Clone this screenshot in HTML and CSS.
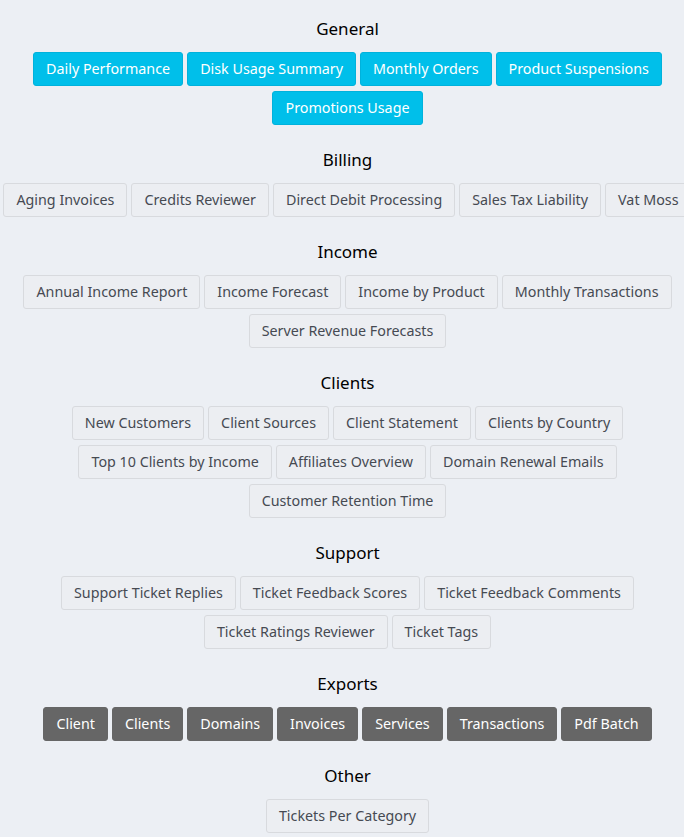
FILE: index.html
```html
<!DOCTYPE html>
<html>
<head>
<meta charset="utf-8">
<link rel="stylesheet" href="styles.css">
</head>
<body>
<div class="page">
  <section class="group">
    <h2 class="title">General</h2>
    <div class="btns">
      <a class="btn btn-info">Daily Performance</a>
      <a class="btn btn-info">Disk Usage Summary</a>
      <a class="btn btn-info">Monthly Orders</a>
      <a class="btn btn-info">Product Suspensions</a>
      <a class="btn btn-info">Promotions Usage</a>
    </div>
  </section>
  <section class="group">
    <h2 class="title">Billing</h2>
    <div class="btns nowrap">
      <a class="btn">Aging Invoices</a>
      <a class="btn">Credits Reviewer</a>
      <a class="btn">Direct Debit Processing</a>
      <a class="btn">Sales Tax Liability</a>
      <a class="btn">Vat Moss</a>
    </div>
  </section>
  <section class="group">
    <h2 class="title">Income</h2>
    <div class="btns">
      <a class="btn">Annual Income Report</a>
      <a class="btn">Income Forecast</a>
      <a class="btn">Income by Product</a>
      <a class="btn">Monthly Transactions</a>
      <a class="btn">Server Revenue Forecasts</a>
    </div>
  </section>
  <section class="group">
    <h2 class="title">Clients</h2>
    <div class="btns">
      <a class="btn">New Customers</a>
      <a class="btn">Client Sources</a>
      <a class="btn">Client Statement</a>
      <a class="btn">Clients by Country</a>
      <a class="btn">Top 10 Clients by Income</a>
      <a class="btn">Affiliates Overview</a>
      <a class="btn">Domain Renewal Emails</a>
      <a class="btn">Customer Retention Time</a>
    </div>
  </section>
  <section class="group">
    <h2 class="title">Support</h2>
    <div class="btns">
      <a class="btn">Support Ticket Replies</a>
      <a class="btn">Ticket Feedback Scores</a>
      <a class="btn">Ticket Feedback Comments</a>
      <a class="btn">Ticket Ratings Reviewer</a>
      <a class="btn">Ticket Tags</a>
    </div>
  </section>
  <section class="group">
    <h2 class="title">Exports</h2>
    <div class="btns">
      <a class="btn btn-dark">Client</a>
      <a class="btn btn-dark">Clients</a>
      <a class="btn btn-dark">Domains</a>
      <a class="btn btn-dark">Invoices</a>
      <a class="btn btn-dark">Services</a>
      <a class="btn btn-dark">Transactions</a>
      <a class="btn btn-dark">Pdf Batch</a>
    </div>
  </section>
  <section class="group">
    <h2 class="title">Other</h2>
    <div class="btns">
      <a class="btn">Tickets Per Category</a>
    </div>
  </section>
</div>
</body>
</html>
```
FILE: styles.css
```css
html, body {
  margin: 0;
  padding: 0;
  background: #eceff4;
  overflow: hidden;
}
body {
  font-family: "Noto Sans", "Open Sans", sans-serif;
  color: #000;
}
.page {
  width: 695px;
  padding-top: 17px;
  display: flex;
  flex-direction: column;
  gap: 23px;
}
.group {
  display: flex;
  flex-direction: column;
  align-items: center;
}
.title {
  margin: 0 0 11px;
  font-size: 17px;
  font-weight: 400;
  line-height: 24px;
  color: #000;
}
.btns {
  width: 100%;
  display: flex;
  flex-wrap: wrap;
  justify-content: center;
  row-gap: 5px;
}
.btns.nowrap {
  flex-wrap: nowrap;
  justify-content: safe center;
}
.btn {
  flex: none;
  display: block;
  margin: 0 2px;
  padding: 6px 12px;
  font-size: 14.3px;
  line-height: 20px;
  color: #464a52;
  background: #eceef2;
  border: 1px solid #d8dade;
  border-radius: 3px;
  white-space: nowrap;
}
.btn-info {
  color: #fff;
  background: #00bfea;
  border-color: #00b2dc;
}
.btn-dark {
  color: #fff;
  background: #666666;
  border-color: #666666;
  font-weight: 400;
}
```
